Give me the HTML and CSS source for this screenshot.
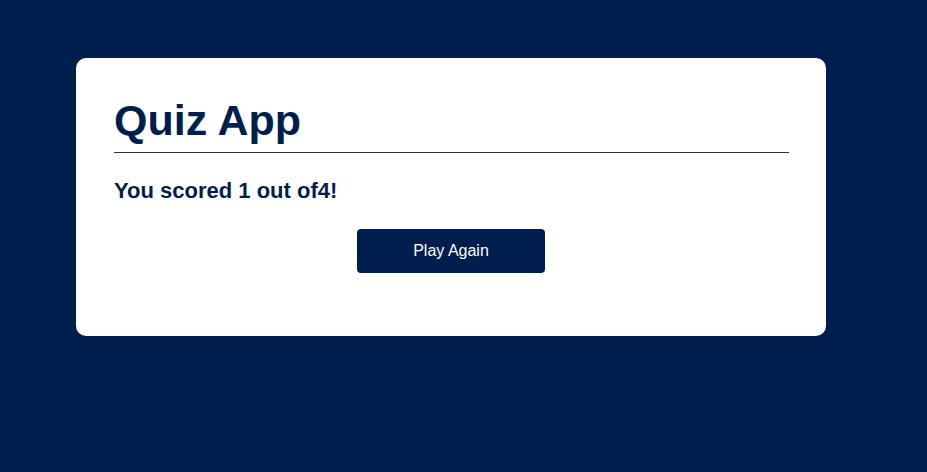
FILE: index.html
```html
<!DOCTYPE html>
<html>
<head>
<meta charset="utf-8">
<link rel="stylesheet" href="styles.css">
</head>
<body>
<div class="app">
  <h1 class="title">Quiz App</h1>
  <div class="quiz">
    <h2 class="question">You scored 1 out of4!</h2>
    <button class="next-btn">Play Again</button>
  </div>
</div>
</body>
</html>
```
FILE: styles.css
```css
* { box-sizing: border-box; }
body {
  margin: 0;
  background: #001e4d;
  font-family: "Liberation Sans", Arial, sans-serif;
}
.app {
  width: 750px;
  margin: 58px 0 0 76px;
  background: #fff;
  border-radius: 10px;
  padding: 38px 37px 38px 38px;
}
.title {
  margin: 0;
  font-size: 43px;
  line-height: 49px;
  font-weight: 700;
  color: #001e4d;
  padding-bottom: 7px;
  border-bottom: 1px solid #333;
}
.quiz {
  display: flex;
  flex-direction: column;
}
.question {
  margin: 25px 0 0;
  font-size: 22px;
  line-height: 25px;
  font-weight: 700;
  color: #001e4d;
}
.next-btn {
  align-self: center;
  width: 188px;
  height: 44px;
  margin: 26px 1px 25px 0;
  background: #001e4d;
  color: #fff;
  border: 0;
  border-radius: 4px;
  font-family: "Liberation Sans", Arial, sans-serif;
  font-size: 16px;
}
```
